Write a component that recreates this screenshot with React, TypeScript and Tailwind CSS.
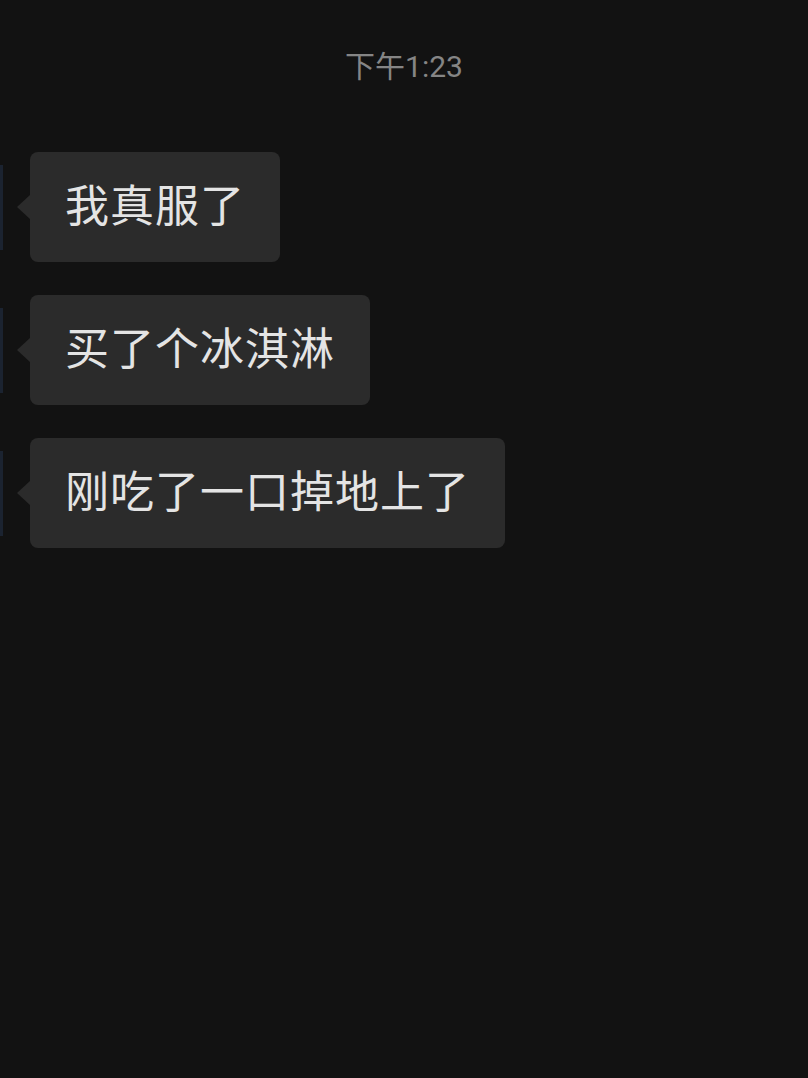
const messages = ['我真服了', '买了个冰淇淋', '刚吃了一口掉地上了'];

function Bubble({ text }: { text: string }) {
  return (
    <div className="flex items-center h-[110px]">
      <div className="w-[3px] h-[85px] bg-[#1b2330] shrink-0" />
      <div className="ml-[14px] w-0 h-0 border-y-[12px] border-y-transparent border-r-[13px] border-r-[#2b2b2b]" />
      <div className="flex items-center h-full px-[35px] rounded-lg bg-[#2b2b2b] text-[44px] leading-none text-[#e4e4e4] tracking-[1px]">
        {text}
      </div>
    </div>
  );
}

export default function App() {
  return (
    <div
      className="w-[808px] h-[1078px] bg-[#121212] overflow-hidden"
      style={{ fontFamily: '"Roboto", "Noto Sans CJK SC", sans-serif' }}
    >
      <div className="pt-[52px] flex justify-center">
        <p className="text-[30px] leading-none text-[#858585]">下午1:23</p>
      </div>
      <div className="mt-[70px] flex flex-col gap-[33px]">
        {messages.map((m) => (
          <Bubble key={m} text={m} />
        ))}
      </div>
    </div>
  );
}
